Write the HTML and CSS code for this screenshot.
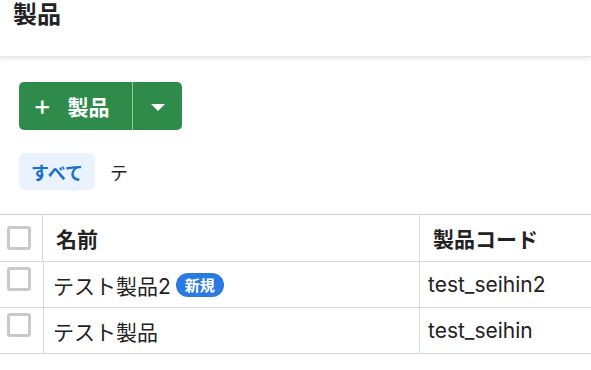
FILE: index.html
```html
<!DOCTYPE html>
<html lang="ja">
<head>
    <meta charset="UTF-8">
    <meta name="viewport" content="width=device-width, initial-scale=1.0">
    <title>製品</title>
    <link rel="stylesheet" href="styles.css">
</head>
<body>
    <div id="pageHeader">
        <h1 class="pageTitle">製品</h1>
    </div>

    <div id="content">
        <div class="splitButton">
            <button class="mainAction">
                <span class="plus">+</span>
                <span>製品</span>
            </button>
            <button class="menuToggle" aria-label="メニュー">
                <svg width="14" height="7" viewBox="0 0 14 7"><path d="M0 0 L14 0 L7 7 Z" fill="#fff"/></svg>
            </button>
        </div>

        <div class="tabs">
            <div class="tab active">すべて</div>
            <div class="tab">テ</div>
        </div>
    </div>

    <div class="tableWrap">
        <div class="row headRow">
            <div class="cell checkCell"><span class="checkbox"></span></div>
            <div class="cell nameCell">名前</div>
            <div class="cell codeCell">製品コード</div>
        </div>
        <div class="row">
            <div class="cell checkCell"><span class="checkbox"></span></div>
            <div class="cell nameCell">テスト製品2 <span class="badge">新規</span></div>
            <div class="cell codeCell">test_seihin2</div>
        </div>
        <div class="row">
            <div class="cell checkCell"><span class="checkbox"></span></div>
            <div class="cell nameCell">テスト製品</div>
            <div class="cell codeCell">test_seihin</div>
        </div>
    </div>
</body>
</html>
```

FILE: styles.css
```css
* {
    margin: 0;
    padding: 0;
    box-sizing: border-box;
}

body {
    background: #fff;
    color: #222;
    font-family: Inter, "Noto Sans CJK JP", sans-serif;
    overflow: hidden;
}

#pageHeader {
    height: 57px;
    padding: 3px 13px 0;
    box-shadow: 0 2px 4px rgba(0,0,0,0.09);
    border-bottom: 1px solid #e6e6e6;
}

.pageTitle {
    font-size: 24px;
    line-height: 24px;
    font-weight: 700;
    color: #222;
}

#content {
    padding: 25px 19px 0;
}

.splitButton {
    display: inline-flex;
    height: 48px;
    background: #2e8b4a;
    border-radius: 5px;
    overflow: hidden;
}

.splitButton button {
    background: none;
    border: none;
    color: #fff;
    font-family: inherit;
    cursor: pointer;
    display: flex;
    align-items: center;
}

.mainAction {
    width: 114px;
    padding-left: 14px;
    gap: 16px;
    font-size: 21px;
    font-weight: 700;
    border-right: 1px solid rgba(255,255,255,0.5) !important;
}

.mainAction .plus {
    font-size: 28px;
    font-weight: 400;
    line-height: 1;
    margin-top: -3px;
}

.menuToggle {
    width: 49px;
    justify-content: center;
    padding-top: 2px;
}

.tabs {
    display: flex;
    margin-top: 23px;
}

.tab {
    height: 37px;
    padding: 0 15px;
    display: flex;
    align-items: center;
    font-size: 18px;
    border-radius: 6px;
    color: #222;
}

.tab.active {
    background: #eaf3fd;
    color: #1a6fd1;
    font-weight: 700;
    width: 76px;
    justify-content: center;
    padding: 0;
}

.tableWrap {
    margin-top: 24px;
    width: 700px;
    border-top: 1px solid #d0d0d0;
}

.row {
    display: flex;
    height: 46px;
    border-bottom: 1px solid #d6d6d6;
    font-size: 21px;
}

.headRow {
    height: 47px;
    font-weight: 700;
}

.cell {
    display: flex;
    align-items: center;
    padding-left: 9px;
}

.headRow .cell {
    padding-left: 13px;
}

.checkCell {
    width: 44px;
    padding-left: 7px !important;
    align-items: flex-start;
    padding-top: 5px;
    border-right: 1px solid #d6d6d6;
}

.headRow .checkCell {
    align-items: center;
    padding-top: 0;
    width: 43px;
}

.nameCell {
    width: 376px;
    border-right: 1px solid #dcdcdc;
}

.headRow .nameCell {
    width: 377px;
}

.codeCell {
    padding-left: 8px;
}

.checkbox {
    display: block;
    width: 24px;
    height: 24px;
    border: 3px solid #c9c9c9;
    border-radius: 3px;
}

.badge {
    display: inline-flex;
    align-items: center;
    justify-content: center;
    width: 48px;
    height: 24px;
    margin-left: 5px;
    border-radius: 12px;
    background: #2a7ae2;
    color: #fff;
    font-size: 15px;
    font-weight: 700;
}
```
